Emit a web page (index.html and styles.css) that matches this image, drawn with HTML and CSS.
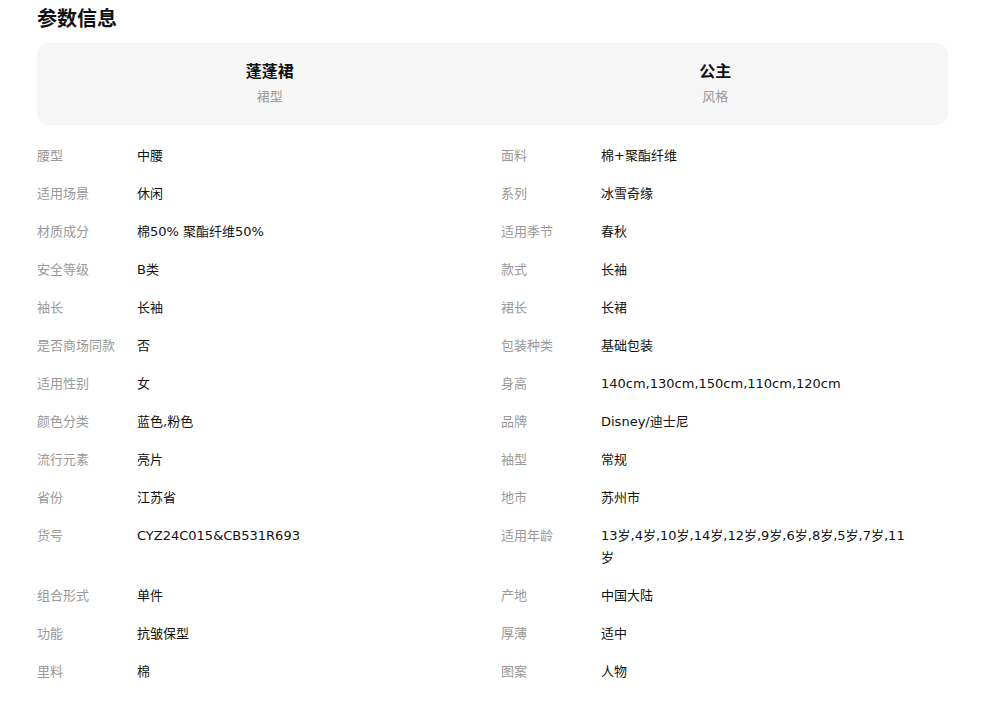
FILE: index.html
```html
<!DOCTYPE html>
<html lang="zh-CN">
<head>
<meta charset="utf-8">
<link rel="stylesheet" href="styles.css">
</head>
<body>
<div class="page">
  <h2 class="title">参数信息</h2>
  <div class="card">
    <div class="hl"><div class="hl-v">蓬蓬裙</div><div class="hl-k">裙型</div></div>
    <div class="hl"><div class="hl-v">公主</div><div class="hl-k">风格</div></div>
  </div>
  <div class="grid">
    <div class="item"><span class="k">腰型</span><span class="v">中腰</span></div>
    <div class="item"><span class="k">面料</span><span class="v">棉+聚酯纤维</span></div>
    <div class="item"><span class="k">适用场景</span><span class="v">休闲</span></div>
    <div class="item"><span class="k">系列</span><span class="v">冰雪奇缘</span></div>
    <div class="item"><span class="k">材质成分</span><span class="v">棉50% 聚酯纤维50%</span></div>
    <div class="item"><span class="k">适用季节</span><span class="v">春秋</span></div>
    <div class="item"><span class="k">安全等级</span><span class="v">B类</span></div>
    <div class="item"><span class="k">款式</span><span class="v">长袖</span></div>
    <div class="item"><span class="k">袖长</span><span class="v">长袖</span></div>
    <div class="item"><span class="k">裙长</span><span class="v">长裙</span></div>
    <div class="item"><span class="k">是否商场同款</span><span class="v">否</span></div>
    <div class="item"><span class="k">包装种类</span><span class="v">基础包装</span></div>
    <div class="item"><span class="k">适用性别</span><span class="v">女</span></div>
    <div class="item"><span class="k">身高</span><span class="v">140cm,130cm,150cm,110cm,120cm</span></div>
    <div class="item"><span class="k">颜色分类</span><span class="v">蓝色,粉色</span></div>
    <div class="item"><span class="k">品牌</span><span class="v">Disney/迪士尼</span></div>
    <div class="item"><span class="k">流行元素</span><span class="v">亮片</span></div>
    <div class="item"><span class="k">袖型</span><span class="v">常规</span></div>
    <div class="item"><span class="k">省份</span><span class="v">江苏省</span></div>
    <div class="item"><span class="k">地市</span><span class="v">苏州市</span></div>
    <div class="item"><span class="k">货号</span><span class="v">CYZ24C015&amp;CB531R693</span></div>
    <div class="item"><span class="k">适用年龄</span><span class="v">13岁,4岁,10岁,14岁,12岁,9岁,6岁,8岁,5岁,7岁,11岁</span></div>
    <div class="item"><span class="k">组合形式</span><span class="v">单件</span></div>
    <div class="item"><span class="k">产地</span><span class="v">中国大陆</span></div>
    <div class="item"><span class="k">功能</span><span class="v">抗皱保型</span></div>
    <div class="item"><span class="k">厚薄</span><span class="v">适中</span></div>
    <div class="item"><span class="k">里料</span><span class="v">棉</span></div>
    <div class="item"><span class="k">图案</span><span class="v">人物</span></div>
  </div>
</div>
</body>
</html>
```
FILE: styles.css
```css
* { box-sizing: border-box; }
body {
  margin: 0;
  background: #fff;
  font-family: "DejaVu Sans", "Noto Sans CJK SC", sans-serif;
  color: #111;
}
.page {
  width: 911px;
  margin-left: 37px;
  padding-top: 6px;
}
.title {
  margin: 0;
  font-family: "Noto Sans CJK SC", sans-serif;
  font-size: 20px;
  line-height: 24px;
  font-weight: bold;
  color: #111;
}
.card {
  margin-top: 13px;
  height: 82px;
  background: #f6f6f6;
  border-radius: 12px;
  padding: 0 10px 3px;
  display: grid;
  grid-template-columns: 1fr 1fr;
  align-content: center;
}
.hl { text-align: center; }
.hl-v {
  font-family: "Noto Sans CJK SC", sans-serif;
  font-size: 16px;
  font-weight: bold;
  line-height: 22px;
  color: #111;
}
.hl-k {
  margin-top: 7px;
  font-size: 13px;
  line-height: 18px;
  color: #999;
}
.grid {
  margin-top: 12px;
  display: grid;
  grid-template-columns: 1fr 1fr;
  column-gap: 17px;
}
.item {
  display: flex;
  padding: 8px 38px 8px 0;
  font-size: 13px;
  line-height: 22px;
}
.k {
  flex: 0 0 100px;
  color: #999;
}
.v {
  flex: 1;
  color: #111;
  word-break: break-all;
}
```
